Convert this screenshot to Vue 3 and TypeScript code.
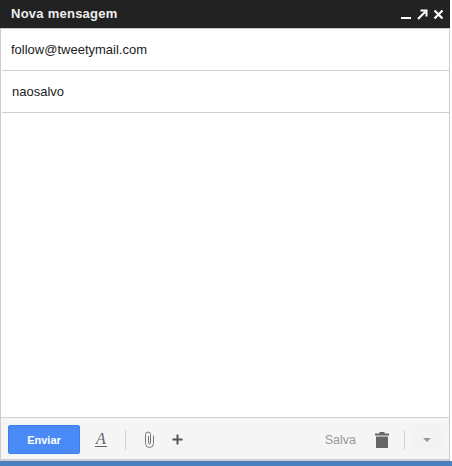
<script setup lang="ts">
const fields: { text: string; cls: string }[] = [
  { text: 'follow@tweetymail.com', cls: 'field--to' },
  { text: 'naosalvo', cls: 'field--subject' },
]
</script>

<template>
  <div class="page">
    <div class="compose">
      <header class="titlebar">
        <span class="title">Nova mensagem</span>
        <div class="window-actions">
          <svg width="11" height="11" viewBox="0 0 11 11"><rect x="0" y="8" width="10" height="2" fill="#fff" /></svg>
          <svg width="11" height="11" viewBox="0 0 11 11"><path d="M1 10 8 3M3.5 1.5H9.5V7.5" fill="none" stroke="#fff" stroke-width="2" /></svg>
          <svg width="11" height="11" viewBox="0 0 11 11"><path d="M1.5 1.5 9.5 9.5M9.5 1.5 1.5 9.5" fill="none" stroke="#fff" stroke-width="2.2" /></svg>
        </div>
      </header>
      <div v-for="f in fields" :key="f.text" class="field" :class="f.cls">{{ f.text }}</div>
      <div class="body"></div>
      <footer class="toolbar">
        <button class="send">Enviar</button>
        <span class="format">A</span>
        <span class="divider divider--left"></span>
        <svg class="clip" width="11" height="17" viewBox="0 0 11 17">
          <path d="M9.5 4.5V12.5A4 4 0 0 1 1.5 12.5V3.5A2.5 2.5 0 0 1 6.5 3.5V12A1 1 0 0 1 4.5 12V5" fill="none" stroke="#777" stroke-width="1" />
        </svg>
        <svg class="plus" width="11" height="11" viewBox="0 0 11 11"><path d="M5.5 0.5V10.5M0.5 5.5H10.5" stroke="#555" stroke-width="2" /></svg>
        <span class="spacer"></span>
        <span class="saved">Salva</span>
        <svg class="trash" width="14" height="16" viewBox="0 0 14 16">
          <path d="M0 1.5H4.5V0H9.5V1.5H14V3.5H0ZM1 4.5H13V16H1Z" fill="#666" />
        </svg>
        <span class="divider divider--right"></span>
        <button class="more"><span class="caret"></span></button>
      </footer>
    </div>
    <div class="desktop"></div>
  </div>
</template>

<style>
html, body {
  margin: 0;
  background: #fff;
}
</style>

<style scoped>
.page {
  width: 452px;
  height: 466px;
  display: flex;
  flex-direction: column;
  font-family: "Liberation Sans", Arial, sans-serif;
  background: #fff;
}

.compose {
  width: 450px;
  height: 461px;
  flex: none;
  display: flex;
  flex-direction: column;
  background: #fff;
  border-right: 1px solid #ccc;
  border-left: 1px solid #ccc;
  box-sizing: border-box;
  border-bottom: 2px solid #ccc;
}

.titlebar {
  height: 29px;
  margin: 0 -1px;
  flex: none;
  display: flex;
  align-items: center;
  justify-content: space-between;
  background: #222;
  padding: 0 6px 0 11px;
  box-sizing: border-box;
  border-bottom: 1px solid #c8c8c8;
}

.title {
  color: #eee;
  font-size: 13px;
  font-weight: bold;
  letter-spacing: 0.25px;
  margin-top: -2px;
}

.window-actions {
  display: flex;
  gap: 5px;
}

.field {
  height: 42px;
  flex: none;
  box-sizing: border-box;
  display: flex;
  align-items: center;
  margin-left: 1px;
  border-bottom: 1px solid #cfcfcf;
  font-size: 13px;
  color: #222;
  background: #fff;
}

.field--to {
  padding-left: 9px;
}

.field--subject {
  padding-left: 10px;
}

.body {
  flex: 1;
}

.toolbar {
  height: 42px;
  flex: none;
  display: flex;
  align-items: center;
  box-sizing: border-box;
  background: #f5f5f5;
  border-top: 1px solid #cfcfcf;
  padding: 2px 7px 0 7px;
}

.send {
  width: 72px;
  height: 29px;
  padding: 0;
  border: 1px solid #3b7ff0;
  border-radius: 2px;
  background: #4a8af6;
  color: #fff;
  font: bold 11px "Liberation Sans", Arial, sans-serif;
}

.format {
  margin-left: 15px;
  width: 12px;
  font: italic 16px "Liberation Serif", serif;
  color: #666;
  text-align: center;
  border-bottom: 1px solid #666;
  line-height: 14px;
}

.divider {
  width: 1px;
  height: 20px;
  background: #d4d4d4;
}

.divider--left {
  margin-left: 18px;
}

.clip {
  margin-left: 18px;
}

.plus {
  margin-left: 17px;
}

.spacer {
  flex: 1;
}

.saved {
  color: #999;
  font-size: 12.5px;
}

.trash {
  margin-left: 19px;
}

.divider--right {
  margin-left: 15px;
}

.more {
  width: 32px;
  height: 29px;
  margin-left: 5px;
  padding: 0 0 0 2px;
  border: none;
  background: #f3f3f3;
  display: flex;
  align-items: center;
  justify-content: center;
}

.caret {
  border-left: 4px solid transparent;
  border-right: 4px solid transparent;
  border-top: 4px solid #999;
}

.desktop {
  flex: 1;
  background: #4a7fbe;
}
</style>
